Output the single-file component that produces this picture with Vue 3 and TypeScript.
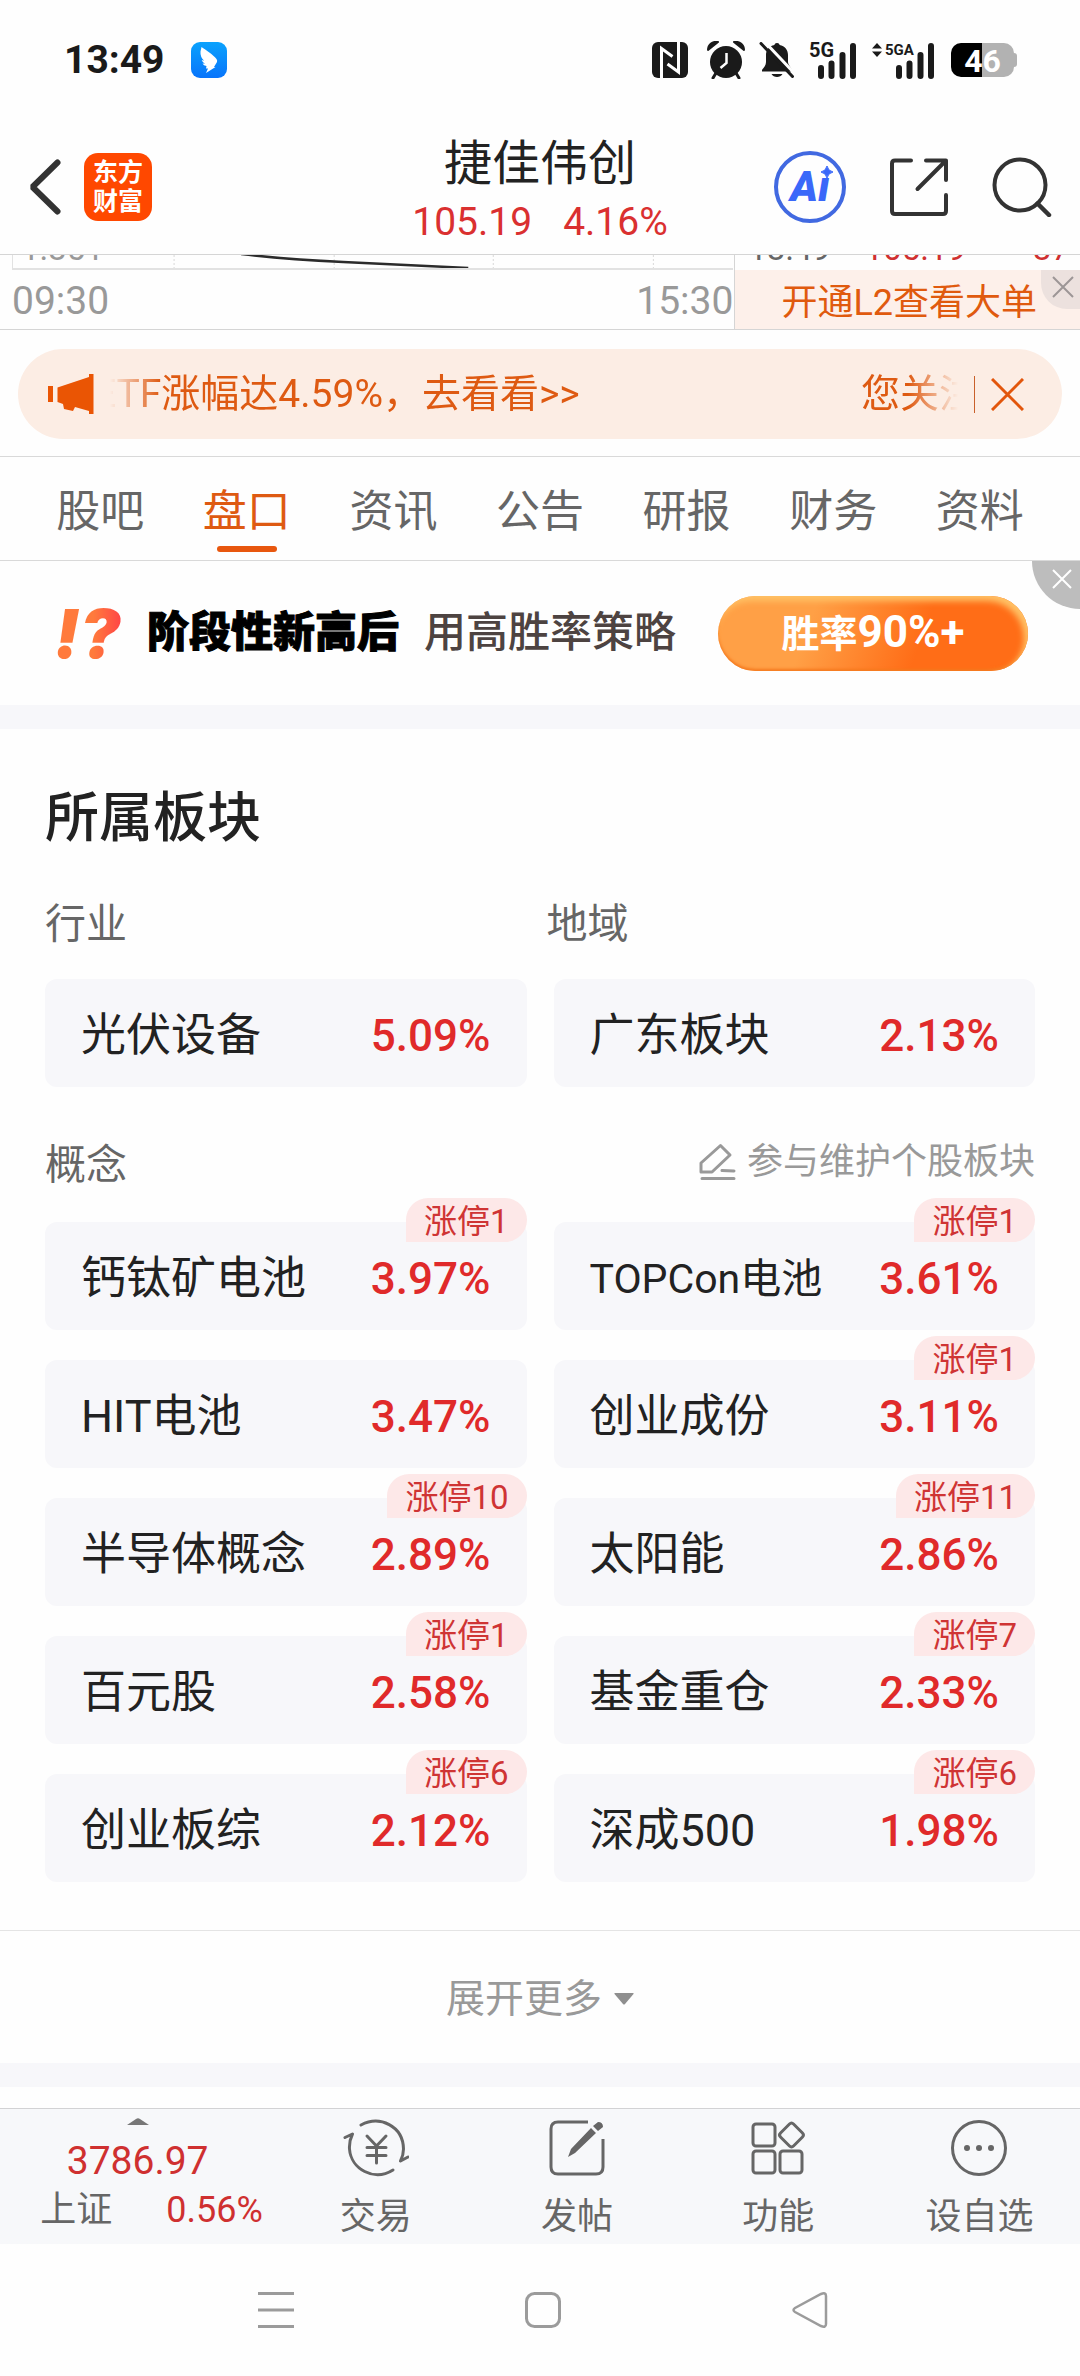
<script setup lang="ts">
import { ref } from 'vue'

interface Sector {
  name: string
  change: string
  limitUp?: number
  compact?: boolean
}

const tabs = ['股吧', '盘口', '资讯', '公告', '研报', '财务', '资料']
const activeTab = ref('盘口')

const basics: Sector[] = [
  { name: '光伏设备', change: '5.09%' },
  { name: '广东板块', change: '2.13%' },
]

const concepts: Sector[] = [
  { name: '钙钛矿电池', change: '3.97%', limitUp: 1 },
  { name: 'TOPCon电池', change: '3.61%', limitUp: 1, compact: true },
  { name: 'HIT电池', change: '3.47%' },
  { name: '创业成份', change: '3.11%', limitUp: 1 },
  { name: '半导体概念', change: '2.89%', limitUp: 10 },
  { name: '太阳能', change: '2.86%', limitUp: 11 },
  { name: '百元股', change: '2.58%', limitUp: 1 },
  { name: '基金重仓', change: '2.33%', limitUp: 7 },
  { name: '创业板综', change: '2.12%', limitUp: 6 },
  { name: '深成500', change: '1.98%', limitUp: 6 },
]
</script>

<template>
  <div class="screen">
    <div class="status">
      <span class="clock">13:49</span>
      <svg class="wing" width="36" height="36" viewBox="0 0 36 36" aria-hidden="true">
        <defs>
          <linearGradient id="wingBg" x1="0" y1="0" x2="0" y2="1">
            <stop offset="0" stop-color="#0aa2fd" />
            <stop offset="1" stop-color="#0874fb" />
          </linearGradient>
        </defs>
        <rect width="36" height="36" rx="9" fill="url(#wingBg)" />
        <path d="M10.500 5C15 8 22 12.500 25.500 17q1 1.500.5 3l-3 5h1.500L15 31l2-4.500h-2l.5-2.500q-3-.5-4-2.500l2.500.3q-2.500-1.300-3.300-3.800l2.500.8Q9 15 9.500 9.500z" fill="#fff" />
      </svg>
      <div class="system">
        <svg width="36" height="36" viewBox="0 0 36 36" aria-hidden="true">
          <rect width="36" height="36" rx="6" fill="#1a1a1a" />
          <path d="M9.500 36V6.500l11 8M26.500 0v30l-11-8" fill="none" stroke="#fefefe" stroke-width="3" />
        </svg>
        <svg class="alarm" width="38" height="38" viewBox="0 0 38 38" aria-hidden="true">
          <circle cx="19" cy="21" r="16" fill="#1a1a1a" />
          <path d="M9 32l-3 5M29 32l3 5" stroke="#1a1a1a" stroke-width="3" stroke-linecap="round" />
          <path d="M1 9C1 4 5 0 11 1zM37 9c0-5-4-9-10-8z" fill="#1a1a1a" stroke="#1a1a1a" stroke-width="2" stroke-linejoin="round" />
          <path d="M19.500 12v10l-6 5" fill="none" stroke="#fefefe" stroke-width="2.500" />
        </svg>
        <svg class="bell" width="36" height="36" viewBox="0 0 36 36" aria-hidden="true">
          <path d="M18 1c2 0 2.500 1 2.500 2C26 4 29 8 29 13v7c0 3 3 5 4 8v1.500H3V28c2-2.500 4-5 4-8v-7C7 8 10 4 15.500 3c0-1 .5-2 2.500-2zM12.500 32h11c-2 4-9 4-11 0z" fill="#1a1a1a" />
          <path d="M4.500-1.500l32 34" stroke="#fefefe" stroke-width="3" />
          <path d="M2 1.500l31.500 33" stroke="#1a1a1a" stroke-width="3" stroke-linecap="round" />
        </svg>
        <span class="signal">
          <span class="net">5G</span>
          <svg width="38" height="37" viewBox="0 0 38 37" aria-hidden="true">
            <path d="M3 26v8M13.500 21.500v12.500M24.500 13v21M35 4v30" stroke="#1a1a1a" stroke-width="6" stroke-linecap="round" />
          </svg>
        </span>
        <span class="signal second">
          <svg class="updown" width="10" height="14" viewBox="0 0 10 14" aria-hidden="true">
            <path d="M0 5.500L5 0l5 5.500zM0 8.500h10L5 14z" fill="#1a1a1a" />
          </svg>
          <span class="net narrow">5GA</span>
          <svg width="38" height="37" viewBox="0 0 38 37" aria-hidden="true">
            <path d="M3 26v8M13.500 21.500v12.500M24.500 13v21M35 4v30" stroke="#1a1a1a" stroke-width="6" stroke-linecap="round" />
          </svg>
        </span>
        <span class="battery"><span class="cell">46</span></span>
      </div>
    </div>

    <header class="header">
      <div class="head-left">
        <button class="plain back" aria-label="返回">
          <svg width="34" height="58" viewBox="0 0 34 58"><path d="M29.500 4.500L4.500 29l25 24.500" fill="none" stroke="#333" stroke-width="6" stroke-linecap="round" stroke-linejoin="bevel" /></svg>
        </button>
        <a class="logo" href="#"><span>东方</span><span>财富</span></a>
      </div>
      <div class="head-title">
        <h1>捷佳伟创</h1>
        <p><span>105.19</span><span>4.16%</span></p>
      </div>
      <div class="head-right">
        <button class="plain ai" aria-label="Ai">
          <span>Aı</span>
          <svg width="12" height="12" viewBox="0 0 12 12"><path d="M6 0q1 5 6 6q-5 1-6 6q-1-5-6-6q5-1 6-6z" fill="#3a68f9" stroke="#3a68f9" /></svg>
        </button>
        <button class="plain" aria-label="分享">
          <svg width="58" height="58" viewBox="0 0 58 58"><path d="M21 2.500H5Q2 2.500 2 5.500V53q0 3 3 3h48q3 0 3-3V37M56 22V2.500H36M55 3.500L27.500 31" fill="none" stroke="#333" stroke-width="4" stroke-linecap="round" stroke-linejoin="round" /></svg>
        </button>
        <button class="plain" aria-label="搜索">
          <svg width="60" height="60" viewBox="0 0 60 60"><circle cx="28" cy="28" r="25.500" fill="none" stroke="#333" stroke-width="4" /><path d="M45.500 46.500L57 58" stroke="#333" stroke-width="4.500" stroke-linecap="round" /></svg>
        </button>
      </div>
    </header>

    <section class="chart">
      <div class="minute">
        <div class="plot">
          <svg width="100%" height="13" viewBox="0 0 720 13" preserveAspectRatio="none" aria-hidden="true">
            <path d="M161 0v13M321 0v13M480 0v13M640 0v13" stroke="#d9d9d9" stroke-dasharray="2 2" />
            <path d="M228-1Q270 4 330 7T455 13" fill="none" stroke="#2b2b2b" stroke-width="2.500" />
          </svg>
          <span>1.351</span>
        </div>
        <div class="hours"><span>09:30</span><span>15:30</span></div>
      </div>
      <div class="ticks">
        <div class="tick"><span>13:49</span><span class="up">105.19</span><span class="up vol">37</span></div>
        <div class="level2">
          <a href="#">开通L2查看大单</a>
          <button class="plain shut" aria-label="关闭">
            <svg width="22" height="22" viewBox="0 0 22 22"><path d="M1 1l20 20M21 1L1 21" stroke="#9c9696" stroke-width="2" /></svg>
          </button>
        </div>
      </div>
    </section>

    <div class="notice">
      <div class="pill">
        <svg width="46" height="40" viewBox="0 0 46 40" aria-hidden="true"><path d="M0 12h5v16H0zM9.500 13.500L41 3V0h4.500v40H41v-3L27 33l-2 4-9-2-1-5-5.500-2z" fill="#ea5504" /></svg>
        <div class="marquee"><span>ETF涨幅达4.59%，去看看&gt;&gt;</span><span>您关注</span></div>
        <button class="plain dismiss" aria-label="关闭">
          <svg width="33" height="33" viewBox="0 0 33 33"><path d="M1 1l31 31M32 1L1 32" stroke="#e2560c" stroke-width="3" /></svg>
        </button>
      </div>
    </div>

    <nav class="tabs">
      <button v-for="tab in tabs" :key="tab" class="plain tab" :class="{ active: tab === activeTab }" @click="activeTab = tab">{{ tab }}</button>
    </nav>

    <section class="promo">
      <em>!?</em>
      <strong>阶段性新高后</strong>
      <span class="strategy">用高胜率策略</span>
      <button class="rate">胜率<span>90%+</span></button>
      <button class="plain promo-close" aria-label="关闭">
        <svg width="20" height="20" viewBox="0 0 20 20"><path d="M1 1l18 18M19 1L1 19" stroke="#fff" stroke-width="2" /></svg>
      </button>
    </section>

    <div class="band"></div>

    <main class="sectors">
      <h2>所属板块</h2>
      <div class="labels"><h3>行业</h3><h3>地域</h3></div>
      <div class="grid">
        <a v-for="item in basics" :key="item.name" class="card" href="#"><span>{{ item.name }}</span><b>{{ item.change }}</b></a>
      </div>
      <div class="concept-head">
        <h3>概念</h3>
        <a href="#">
          <svg width="38" height="38" viewBox="0 0 38 38" aria-hidden="true"><path d="M2 29V20L21.500 2.500 31 12 13 29zM23 27.500l12 .5M3 35.500h32" fill="none" stroke="#999" stroke-width="3" stroke-linejoin="round" stroke-linecap="round" /></svg>
          <span>参与维护个股板块</span>
        </a>
      </div>
      <div class="grid">
        <a v-for="item in concepts" :key="item.name" class="card" href="#">
          <span :class="{ compact: item.compact }">{{ item.name }}</span><b>{{ item.change }}</b>
          <i v-if="item.limitUp" class="badge">涨停{{ item.limitUp }}</i>
        </a>
      </div>
    </main>

    <button class="plain more">
      <span>展开更多</span>
      <svg width="20" height="12" viewBox="0 0 20 12" aria-hidden="true"><path d="M1 0h18q1 0 .5 1L11 11q-1 1-2 0L.5 1Q0 0 1 0z" fill="#8f8f8f" /></svg>
    </button>
    <div class="band last"></div>

    <footer class="toolbar">
      <button class="plain index">
        <svg width="22" height="7" viewBox="0 0 22 7" aria-hidden="true"><path d="M0 7L9 1q2-1.500 4 0l9 6z" fill="#777" /></svg>
        <span class="point">3786.97</span>
        <span class="row"><span>上证</span><span class="red">0.56%</span></span>
      </button>
      <button class="plain tool">
        <svg width="66" height="60" viewBox="0 0 66 60" fill="none" stroke="#666" stroke-width="3" stroke-linecap="round" stroke-linejoin="round">
          <path d="M18 7C37-3 60 8 60.500 31q0 6-3 12l7.500-4M50 52C31 64 8 51 6.500 31Q6 23 9.500 16L2 19.500" />
          <path d="M24 18l9.500 10L43 18M33.500 28v17M24 29.500h19M24 37.500h19" />
        </svg>
        <span>交易</span>
      </button>
      <button class="plain tool">
        <svg width="56" height="60" viewBox="0 0 56 60">
          <path d="M39 4H9Q2 4 2 11v38q0 7 7 7h38q7 0 7-7V21" fill="none" stroke="#666" stroke-width="3" />
          <path d="M19 39l3-8L42 10l5 5-21 20zM44 8l5-4q5 0 5 5l-5 4z" fill="#666" />
        </svg>
        <span>发帖</span>
      </button>
      <button class="plain tool">
        <svg width="54" height="60" viewBox="0 0 54 60" fill="none" stroke="#666" stroke-width="3">
          <rect x="2" y="6" width="22" height="22" rx="3" /><rect x="2" y="33" width="22" height="22" rx="3" /><rect x="29" y="33" width="22" height="22" rx="3" />
          <path d="M38.500 6q2-2 4 0l9 9q2 2 0 4l-9 9q-2 2-4 0l-9-9q-2-2 0-4z" />
        </svg>
        <span>功能</span>
      </button>
      <button class="plain tool">
        <svg width="58" height="60" viewBox="0 0 58 60"><circle cx="29" cy="30" r="26.500" fill="none" stroke="#666" stroke-width="3" /><g fill="#666"><circle cx="17" cy="30" r="3" /><circle cx="29" cy="30" r="3" /><circle cx="41" cy="30" r="3" /></g></svg>
        <span>设自选</span>
      </button>
    </footer>

    <nav class="system-nav">
      <button class="plain" aria-label="最近任务"><svg width="36" height="36" viewBox="0 0 36 36"><path d="M0 1.500h36M0 18h36M0 34.500h36" stroke="#9b9b9b" stroke-width="3" /></svg></button>
      <button class="plain" aria-label="主屏幕"><svg width="36" height="36" viewBox="0 0 36 36"><rect x="1.500" y="1.500" width="33" height="33" rx="8" fill="none" stroke="#9b9b9b" stroke-width="3" /></svg></button>
      <button class="plain" aria-label="返回上一级"><svg width="36" height="36" viewBox="0 0 36 36"><path d="M29 2Q34 0 34 4v28q0 4-5 2L3 20q-3-2 0-4z" fill="none" stroke="#9b9b9b" stroke-width="2.500" /></svg></button>
    </nav>
  </div>
</template>

<style>
body {
  margin: 0;
  background: #fefefe;
}
</style>

<style scoped>
.screen {
  min-height: 100vh;
  overflow: hidden;
  background: #fefefe;
  color: #222;
  font-family: Roboto, "Noto Sans CJK SC", sans-serif;
}
.screen * {
  box-sizing: border-box;
}
svg {
  display: block;
  flex: none;
}
h1, h2, h3, p {
  margin: 0;
  font-weight: 400;
}
a {
  color: inherit;
  text-decoration: none;
}
button {
  font: inherit;
  color: inherit;
  cursor: pointer;
}
.plain {
  padding: 0;
  border: 0;
  background: none;
}

.status {
  display: flex;
  align-items: center;
  height: 118px;
  padding: 2px 63px 0 64px;
}
.clock {
  color: #1a1a1a;
  font-size: 39px;
  font-weight: 700;
  line-height: 48px;
}
.wing {
  margin-left: 26px;
}
.system {
  display: flex;
  align-items: center;
  margin-left: auto;
}
.alarm {
  margin-left: 19px;
}
.bell {
  margin-left: 14px;
}
.signal {
  position: relative;
  display: flex;
  margin-left: 14px;
  padding-left: 9px;
}
.signal.second {
  margin-left: 16px;
  padding-left: 24px;
}
.net {
  position: absolute;
  top: 0;
  left: 0;
  color: #1a1a1a;
  font-size: 20px;
  font-weight: 700;
  line-height: 16px;
}
.net.narrow {
  left: 13px;
  font-size: 15px;
}
.updown {
  position: absolute;
  top: 1px;
  left: 0;
}
.battery {
  display: flex;
  align-items: center;
  margin-left: 17px;
}
.battery::after {
  width: 3px;
  height: 14px;
  border-radius: 0 3px 3px 0;
  background: #b2b2b2;
  content: "";
}
.cell {
  width: 63px;
  height: 34px;
  border-radius: 10px;
  background: linear-gradient(90deg, #000 49%, #b2b2b2 49%);
  color: #fff;
  font-size: 32px;
  font-weight: 700;
  line-height: 36px;
  text-align: center;
}

.header {
  display: grid;
  grid-template-columns: 1fr auto 1fr;
  align-items: center;
  padding: 8px 28px 7px;
}
.head-left {
  display: flex;
  align-items: center;
}
.logo {
  display: flex;
  flex-direction: column;
  justify-content: center;
  width: 68px;
  height: 68px;
  margin-left: 22px;
  border-radius: 14px;
  background: #ff4800;
  color: #fff;
  font-size: 25px;
  font-weight: 700;
  line-height: 29px;
  text-align: center;
}
.head-title {
  padding-top: 5px;
  text-align: center;
}
.head-title h1 {
  font-size: 48px;
  line-height: 66px;
}
.head-title p {
  display: flex;
  justify-content: center;
  gap: 31px;
  color: #da3030;
  font-size: 39px;
  line-height: 50px;
}
.head-right {
  display: flex;
  align-items: center;
  justify-content: flex-end;
  gap: 44px;
}
.ai {
  position: relative;
  width: 72px;
  height: 72px;
  border: 4px solid #4169e1;
  border-radius: 50%;
  color: #3a68f9;
  font-size: 42px;
  font-style: italic;
  font-weight: 900;
  line-height: 64px;
}
.ai svg {
  position: absolute;
  top: 11px;
  left: 43px;
}

.chart {
  display: flex;
  border: solid #d5d5d5;
  border-width: 1px 0;
}
.minute {
  flex: 1;
}
.plot {
  position: relative;
  height: 15px;
  margin: 0 1px 0 12px;
  overflow: hidden;
  border: solid #e2e2e2;
  border-width: 0 0 2px 1px;
}
.plot span {
  position: absolute;
  bottom: 3px;
  left: 8px;
  color: #999;
  font-size: 33px;
  line-height: 33px;
}
.hours {
  display: flex;
  justify-content: space-between;
  padding: 3px 1px 0 12px;
  color: #999;
  font-size: 39px;
  line-height: 56px;
}
.ticks {
  width: 32%;
  border-left: 1px solid #d5d5d5;
}
.tick {
  display: flex;
  align-items: flex-end;
  height: 15px;
  padding: 0 10px 5px 13px;
  overflow: hidden;
  color: #666;
  font-size: 33px;
  line-height: 33px;
}
.tick .up {
  margin-left: 34px;
  color: #d03030;
}
.tick .vol {
  margin-left: auto;
}
.level2 {
  position: relative;
  padding-left: 46px;
  background: #fdf0ea;
  color: #e05a0e;
  font-size: 36px;
}
.level2 a {
  display: block;
  padding-top: 7px;
  line-height: 52px;
}
.shut {
  position: absolute;
  top: 0;
  right: 0;
  display: flex;
  align-items: center;
  justify-content: center;
  width: 39px;
  height: 39px;
  padding: 0 0 6px 4px;
  border-radius: 0 0 0 26px;
  background: #ece1de;
}

.notice {
  padding: 19px 18px 17px;
  border-bottom: 1px solid #d9d9d9;
}
.pill {
  display: flex;
  align-items: center;
  height: 90px;
  padding: 0 38px 0 30px;
  border-radius: 45px;
  background: #fcede4;
  color: #de5a12;
}
.marquee {
  display: flex;
  flex: 1;
  justify-content: space-between;
  margin-left: 16px;
  overflow: hidden;
  font-size: 39px;
  line-height: 60px;
  white-space: nowrap;
  -webkit-mask-image: linear-gradient(90deg, transparent, #000 50px, #000 calc(100% - 50px), transparent);
  mask-image: linear-gradient(90deg, transparent, #000 50px, #000 calc(100% - 50px), transparent);
}
.marquee span:first-child {
  margin-left: -16px;
}
.marquee span:last-child {
  margin-right: -20px;
}
.dismiss {
  margin-left: 16px;
  padding: 2px 0 2px 16px;
  border-left: 1px solid #c9602a;
}

.tabs {
  display: flex;
  padding: 0 27px;
  border-bottom: 1px solid #d9d9d9;
}
.tab {
  position: relative;
  flex: 1;
  padding-top: 7px;
  color: #666;
  font-size: 44px;
  line-height: 96px;
}
.tab.active {
  color: #de5a12;
}
.tab.active::after {
  position: absolute;
  bottom: 8px;
  left: 50%;
  width: 60px;
  height: 6px;
  margin-left: -30px;
  border-radius: 3px;
  background: #e8570e;
  content: "";
}

.promo {
  position: relative;
  display: flex;
  align-items: center;
  height: 144px;
  padding: 0 52px 0 54px;
}
.promo em {
  width: 72px;
  background: linear-gradient(90deg, #ff7a3c 55%, #ff3c48);
  -webkit-background-clip: text;
  background-clip: text;
  color: transparent;
  font-family: Inter, Roboto, sans-serif;
  font-size: 68px;
  font-weight: 900;
  line-height: 80px;
}
.promo strong {
  margin-left: 21px;
  color: #000;
  font-size: 42px;
  font-weight: 900;
  line-height: 60px;
  -webkit-text-stroke: 1px #000;
}
.strategy {
  margin-left: 25px;
  color: #4d4341;
  font-size: 42px;
  font-weight: 500;
  line-height: 60px;
}
.rate {
  width: 310px;
  height: 75px;
  margin-left: auto;
  padding: 0;
  border: 0;
  border-radius: 38px;
  background: linear-gradient(110deg, #ffa046 30%, #ff6d17 65%);
  box-shadow: inset -4px 5px 6px #ffc266, inset 0 -2px 3px #f5781e;
  color: #fff;
  font-size: 38px;
  font-weight: 700;
  line-height: 73px;
}
.rate span {
  font-size: 44px;
}
.promo-close {
  position: absolute;
  top: 0;
  right: 0;
  display: flex;
  width: 48px;
  height: 48px;
  padding: 8px 0 0 20px;
  border-radius: 0 0 0 48px;
  background: #bdbdbd;
}
.band {
  height: 24px;
  background: #f7f7fa;
}
.band.last {
  margin-bottom: 21px;
}

.sectors {
  padding: 58px 45px 48px;
}
.sectors h2 {
  font-size: 54px;
  font-weight: 500;
  line-height: 64px;
}
.sectors h3 {
  color: #666;
  font-size: 41px;
  line-height: 48px;
}
.labels {
  display: grid;
  grid-template-columns: 1fr 1fr;
  gap: 13px;
  margin: 49px 0 31px;
}
.grid {
  display: grid;
  grid-template-columns: 1fr 1fr;
  gap: 30px 27px;
}
.card {
  position: relative;
  display: flex;
  align-items: center;
  justify-content: space-between;
  height: 108px;
  padding: 5px 36px 0;
  border-radius: 12px;
  background: #f7f7fa;
  font-size: 45px;
  line-height: 60px;
}
.compact {
  font-size: 41px;
}
.card b {
  color: #e02a2a;
  font-size: 44px;
  font-weight: 500;
}
.badge {
  position: absolute;
  top: -24px;
  right: 0;
  padding: 4px 18px 0;
  border-radius: 22px 22px 22px 0;
  background: #fde8e8;
  color: #cf3434;
  font-size: 33px;
  font-style: normal;
  line-height: 40px;
}
.concept-head {
  display: flex;
  align-items: flex-start;
  justify-content: space-between;
  margin: 53px 0 34px;
}
.concept-head h3 {
  padding-top: 2px;
  line-height: 46px;
}
.concept-head a {
  display: flex;
  align-items: center;
  gap: 10px;
  color: #999;
  font-size: 36px;
  line-height: 44px;
}

.more {
  display: flex;
  align-items: center;
  justify-content: center;
  gap: 12px;
  width: 100%;
  padding-top: 4px;
  border-top: 1px solid #e4e4e4;
  color: #999;
  font-size: 39px;
  line-height: 128px;
}

.toolbar {
  display: flex;
  height: 136px;
  border-top: 1px solid #d2d2d4;
  background: #f7f8fa;
  color: #666;
  font-size: 36px;
}
.index {
  display: flex;
  flex: 275;
  flex-direction: column;
  align-items: center;
  padding-top: 9px;
}
.point {
  margin-top: 12px;
  color: #cf3030;
  font-size: 39px;
  line-height: 48px;
}
.row {
  display: flex;
  gap: 54px;
  padding-left: 28px;
  line-height: 50px;
}
.red {
  color: #cf3030;
}
.tool {
  display: flex;
  flex: 201;
  flex-direction: column;
  align-items: center;
  padding-top: 9px;
}
.tool span {
  margin-top: 15px;
  line-height: 48px;
}
.system-nav {
  display: flex;
  padding: 0 137px 0 143px;
}
.system-nav button {
  display: flex;
  flex: 1;
  align-items: center;
  justify-content: center;
  height: 132px;
}
</style>
